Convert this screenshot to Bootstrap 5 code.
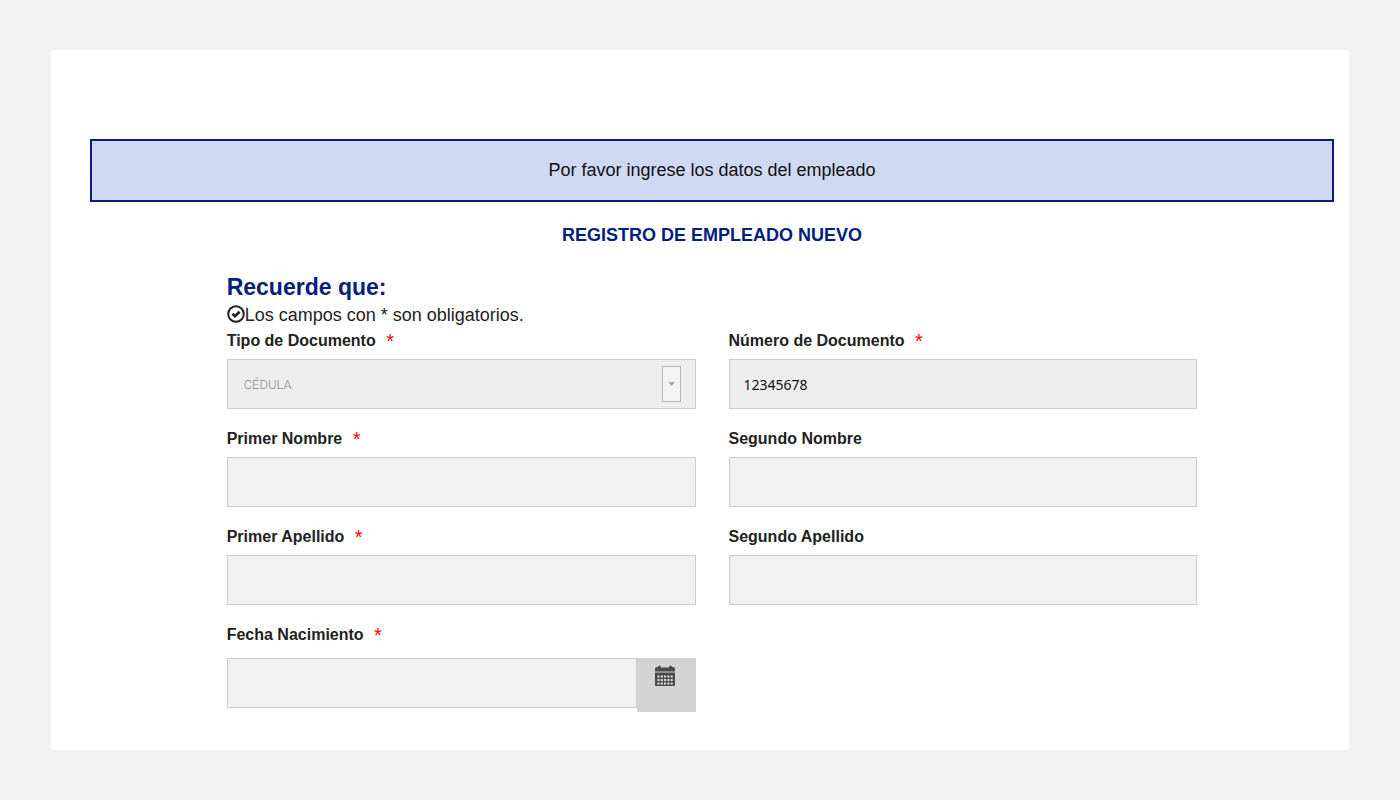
<!DOCTYPE html>
<html lang="es">
<head>
<meta charset="utf-8">
<meta name="viewport" content="width=device-width, initial-scale=1">
<title>Registro de empleado nuevo</title>
<link href="https://cdn.jsdelivr.net/npm/bootstrap@5.3.0/dist/css/bootstrap.min.css" rel="stylesheet">
<style>
  body { background: #f1f1f1; color: #222; font-family: "Liberation Sans", Arial, sans-serif; font-size: 18px; line-height: 24px; padding: 50px 51px; }
  .sheet { background: #fff; padding: 89px 15px 38px 39px; }
  .notice { background: #cfd9f4; border: 2px solid #0b1d78; color: #111; padding: 16px; line-height: 27px; }
  .page-title { color: #00207a; font-size: 18px; line-height: 24px; font-weight: 700; margin: 21px 0 25px; }
  .form-area { padding: 0 33px; }
  .form-area .row { --bs-gutter-x: 33px; }
  .remember { color: #00207a; font-size: 23px; line-height: 30px; font-weight: 700; margin: 0; }
  .rule-line { line-height: 27px; margin: 0; }
  .rule-line svg { width: 18px; height: 18px; margin-top: 3px; }
  .field { margin-bottom: 18px; }
  .field .form-label { display: block; font-weight: 700; font-size: 16px; line-height: 24px; margin-bottom: 6px; }
  .req { color: #f00; font-size: 20px; font-weight: 400; line-height: 16px; margin-left: 6px; vertical-align: -2px; }
  .box, .box:disabled { height: 50px; border: 1px solid #ccc; border-radius: 0; background-color: #f1f1f1; color: #111; padding: 0 14px; font: 14px "Noto Sans", sans-serif; box-shadow: none; }
  .box.locked { background-color: #ededed; }
  select.box:disabled { background-image: none; color: #8c8c8c; opacity: 1; font: 300 13px Roboto, sans-serif; padding: 0 16px; }
  .picker { position: relative; }
  .arrow { position: absolute; top: 7px; right: 15px; width: 19px; height: 36px; border: 1px solid #b5b8ba; background: #f3f3f3; pointer-events: none; }
  .date-field .form-label { margin-bottom: 11px; }
  .date-field { margin-bottom: 0; }
  .date-btn { width: 59px; height: 54px; border: 0; border-radius: 0; background: #d3d3d3; color: #4b4b4b; padding: 7px 2px 0 0; }
  .date-btn svg { width: 20px; height: 22px; }
</style>
</head>
<body>
<main class="sheet">
  <div class="notice text-center" role="status">Por favor ingrese los datos del empleado</div>
  <h1 class="page-title text-center">REGISTRO DE EMPLEADO NUEVO</h1>
  <form class="form-area col-10 mx-auto">
    <h2 class="remember">Recuerde que:</h2>
    <p class="rule-line d-flex align-items-start">
      <svg viewBox="0 0 18 18" aria-hidden="true"><circle cx="9" cy="9" r="7.8" fill="none" stroke="#222" stroke-width="2"/><path d="M5.4 8.8 8 11.200 12.600 6.800" fill="none" stroke="#222" stroke-width="2.8"/></svg>
      <span>Los campos con * son obligatorios.</span>
    </p>
    <div class="row">
      <div class="col-6 field">
        <label class="form-label" for="tipo">Tipo de Documento <span class="req">*</span></label>
        <div class="picker">
          <select class="form-select box locked" id="tipo" disabled><option>CÉDULA</option></select>
          <span class="arrow d-flex align-items-center justify-content-center"><svg width="7" height="4" viewBox="0 0 7 4" aria-hidden="true"><path d="M0 0h7L3.5 4z" fill="#aaa"/></svg></span>
        </div>
      </div>
      <div class="col-6 field">
        <label class="form-label" for="numero">Número de Documento <span class="req">*</span></label>
        <input class="form-control box locked" id="numero" type="text" value="12345678" readonly>
      </div>
      <div class="col-6 field">
        <label class="form-label" for="nombre1">Primer Nombre <span class="req">*</span></label>
        <input class="form-control box" id="nombre1" type="text" required>
      </div>
      <div class="col-6 field">
        <label class="form-label" for="nombre2">Segundo Nombre</label>
        <input class="form-control box" id="nombre2" type="text">
      </div>
      <div class="col-6 field">
        <label class="form-label" for="apellido1">Primer Apellido <span class="req">*</span></label>
        <input class="form-control box" id="apellido1" type="text" required>
      </div>
      <div class="col-6 field">
        <label class="form-label" for="apellido2">Segundo Apellido</label>
        <input class="form-control box" id="apellido2" type="text">
      </div>
      <div class="col-6 field date-field">
        <label class="form-label" for="fecha">Fecha Nacimiento <span class="req">*</span></label>
        <div class="d-flex align-items-start">
          <input class="form-control box" id="fecha" type="text" required>
          <button class="date-btn flex-shrink-0 d-flex justify-content-center align-items-start" type="button" aria-label="Abrir calendario">
            <svg viewBox="0 0 20 22" aria-hidden="true"><path fill="currentColor" d="M0 6.500V4q0-2 2-2h1q0-1.500 1.500-1.500T6 2.500h8q0-2 1.500-2T17 2h1q2 0 2 2v2.500zM0 7.500h20V20q0 1-1 1H1q-1 0-1-1z"/><path d="M2.500 11.500h15.500M2.500 15h15.500M2.500 18.500h15.500" stroke="#e4e4e4" stroke-width="2" stroke-dasharray="2 1.300"/></svg>
          </button>
        </div>
      </div>
    </div>
  </form>
</main>
<script src="https://cdn.jsdelivr.net/npm/bootstrap@5.3.0/dist/js/bootstrap.bundle.min.js"></script>
</body>
</html>
